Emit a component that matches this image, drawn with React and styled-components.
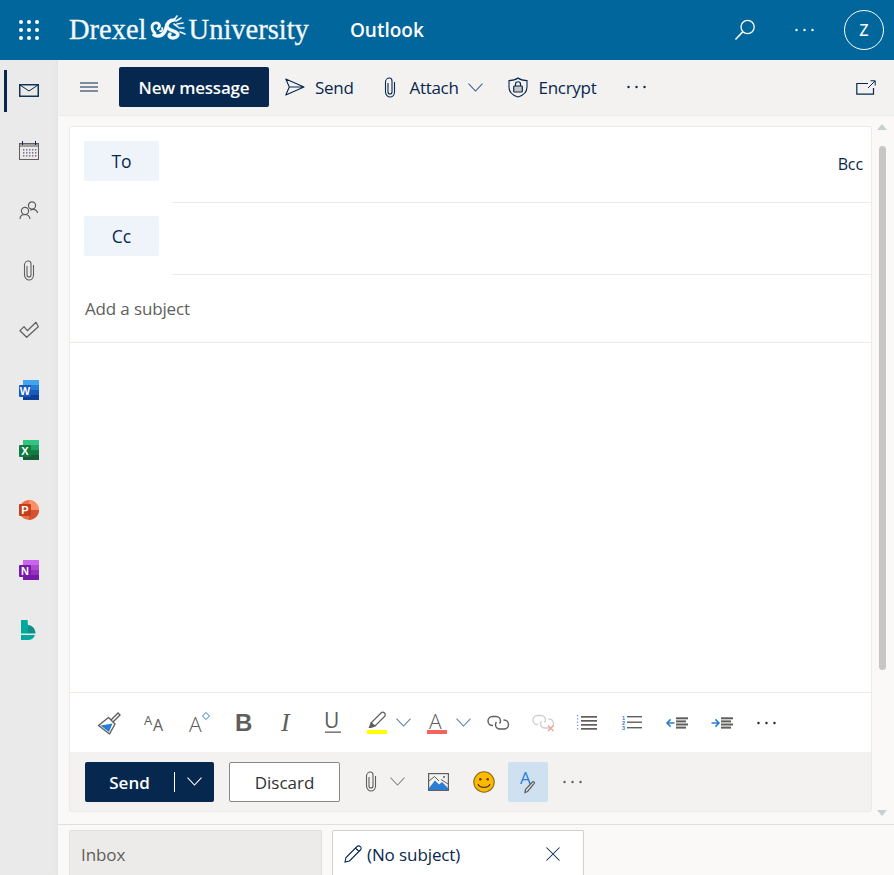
import React from "react";
import styled, { createGlobalStyle } from "styled-components";

const NAVY = "#06284e";
const GREY = "#605e5c";
const BLUE = "#2b7cd3";

const GlobalStyle = createGlobalStyle`
    html, body {
        margin: 0;
        padding: 0;
        overflow: hidden;
    }
    body {
        font-family: "Open Sans", "Noto Sans", "Liberation Sans", sans-serif;
        color: ${NAVY};
    }
    * {
        box-sizing: border-box;
    }
`;

const Page = styled.div`
    display: flex;
    flex-direction: column;
    width: 100vw;
    height: 100vh;
    overflow: hidden;
    background-color: #faf9f8;
`;

const Header = styled.header`
    display: flex;
    align-items: center;
    flex: none;
    height: 60px;
    padding-left: 19px;
    background-color: #00669b;
    color: white;
`;

const Logo = styled.div`
    display: flex;
    align-items: center;
    margin-left: 30px;
    font-family: "Liberation Serif", serif;
    font-size: 28.5px;
    line-height: 32px;
    color: #f4f8fa;
    -webkit-text-stroke: 0.3px #f4f8fa;
`;

const AppName = styled.div`
    margin-left: 41px;
    font-size: 19px;
    font-weight: 600;
`;

const HeaderRight = styled.div`
    display: flex;
    align-items: center;
    margin-left: auto;
    padding-right: 10px;
`;

const HeaderDots = styled.div`
    display: flex;
    margin: 0 30px 0 39px;
`;

const Avatar = styled.div`
    display: flex;
    align-items: center;
    justify-content: center;
    width: 40px;
    height: 40px;
    border: 1px solid white;
    border-radius: 50%;
    font-size: 21px;
    line-height: 1;
    padding-bottom: 3px;
`;

const Body = styled.div`
    display: flex;
    flex: 1;
    min-height: 0;
`;

const Rail = styled.nav`
    flex: none;
    width: 58px;
    background-color: #ebeaea;
    box-shadow: inset -3px 0 3px -2px #e2e1e0;
`;

const RailItem = styled.div`
    position: relative;
    display: flex;
    align-items: center;
    justify-content: center;
    width: 57px;
    height: 60px;

    &::before {
        content: "";
        display: ${(props) => (props.$active ? "block" : "none")};
        position: absolute;
        left: 4px;
        top: 10px;
        width: 3px;
        height: 42px;
        background-color: ${NAVY};
    }
`;

const Main = styled.main`
    display: flex;
    flex-direction: column;
    flex: 1;
    min-width: 0;
`;

const Toolbar = styled.div`
    display: flex;
    align-items: center;
    flex: none;
    height: 56px;
    padding: 0 18px 1px 22px;
    background-color: #f3f2f1;
    border-bottom: 1px solid #edebe9;
    font-size: 17px;
`;

const NewMessage = styled.div`
    display: flex;
    align-items: center;
    justify-content: center;
    width: 150px;
    height: 40px;
    margin: 0 16px 0 21px;
    border-radius: 2px;
    background-color: ${NAVY};
    color: white;
    font-size: 17px;
    font-weight: 600;
    letter-spacing: -0.2px;
`;

const ToolItem = styled.div`
    display: flex;
    align-items: center;
    gap: ${(props) => props.$gap || 11}px;
    margin-right: ${(props) => props.$right || 0}px;
    letter-spacing: -0.3px;
`;

const PopOut = styled.div`
    display: flex;
    margin-left: auto;
`;

const ComposeArea = styled.div`
    display: flex;
    flex: 1;
    min-height: 0;
    padding-left: 11px;
`;

const Card = styled.section`
    display: flex;
    flex-direction: column;
    width: 803px;
    margin: 10px 0 12px;
    background-color: white;
    border: 1px solid #edebe9;
    border-radius: 2px;
`;

const RecipientRow = styled.div`
    display: flex;
    flex: none;
    height: ${(props) => props.$height}px;
    padding-left: 14px;
`;

const RecipientPill = styled.div`
    display: flex;
    align-items: center;
    justify-content: center;
    width: 75px;
    height: 40px;
    margin-top: ${(props) => props.$top}px;
    border-radius: 2px;
    background-color: #eff4fb;
    font-size: 17.5px;
    font-weight: 500;
`;

const RecipientField = styled.div`
    display: flex;
    flex: 1;
    justify-content: flex-end;
    margin-left: 13px;
    border-bottom: 1px solid #edebe9;
`;

const Bcc = styled.span`
    margin: 26px 8px 0 0;
    font-size: 16px;
    line-height: 22px;
    letter-spacing: -0.1px;
`;

const Subject = styled.div`
    display: flex;
    align-items: center;
    flex: none;
    height: 68px;
    padding-left: 15px;
    border-bottom: 1px solid #edebe9;
    color: ${GREY};
    font-size: 17px;
    letter-spacing: -0.15px;
`;

const Editor = styled.div`
    flex: 1;
`;

const FormatBar = styled.div`
    display: flex;
    align-items: center;
    flex: none;
    height: 60px;
    padding-left: 16.6px;
    border-top: 1px solid #edebe9;
`;

const Slot = styled.div`
    display: flex;
    align-items: center;
    justify-content: center;
    flex: none;
    width: ${(props) => props.$w || 44.8}px;
`;

const SplitGroup = styled.div`
    display: flex;
    margin: 0 4px;
`;

const ActionBar = styled.div`
    display: flex;
    align-items: center;
    flex: none;
    height: 59px;
    padding-left: 15px;
    background-color: #f3f2f1;
`;

const SendButton = styled.div`
    display: flex;
    align-items: center;
    width: 129px;
    height: 40px;
    border-radius: 2px;
    background-color: ${NAVY};
    color: white;
    font-size: 17px;
    font-weight: 600;
`;

const SendLabel = styled.span`
    width: 89px;
    padding-top: 1px;
    text-align: center;
`;

const SendSplit = styled.span`
    width: 1px;
    height: 20px;
    background-color: white;
`;

const SendCaret = styled.span`
    display: flex;
    justify-content: center;
    flex: 1;
`;

const DiscardButton = styled.div`
    display: flex;
    align-items: center;
    justify-content: center;
    width: 111px;
    height: 40px;
    margin: 0 19px 0 15px;
    padding-top: 1px;
    border: 1px solid #8a8886;
    border-radius: 2px;
    background-color: white;
    color: #323130;
    font-size: 17px;
    font-weight: 500;
`;

const SignatureButton = styled.div`
    display: flex;
    align-items: center;
    justify-content: center;
    width: 40px;
    height: 40px;
    margin-left: 5px;
    border-radius: 2px;
    background-color: #cfe0f1;
`;

const Scrollbar = styled.div`
    display: flex;
    flex-direction: column;
    align-items: center;
    flex: none;
    width: 20px;
    padding: 8px 0;
`;

const ScrollThumb = styled.div`
    width: 7px;
    height: 524px;
    margin: 16px 0 auto;
    border-radius: 4px;
    background-color: #c8c6c4;
`;

const Arrow = styled.div`
    width: 0;
    height: 0;
    border-left: 5px solid transparent;
    border-right: 5px solid transparent;
    border-top: ${(props) => (props.$down ? "6px solid #c8d0d2" : "none")};
    border-bottom: ${(props) => (props.$down ? "none" : "6px solid #c8d0d2")};
`;

const TabBar = styled.div`
    display: flex;
    flex: none;
    gap: 10px;
    height: 51px;
    padding: 5px 0 0 11px;
    border-top: 1px solid #e1dfdd;
`;

const Tab = styled.div`
    display: flex;
    align-items: center;
    width: ${(props) => props.$width}px;
    height: 50px;
    padding: 0 ${(props) => (props.$active ? 23 : 11)}px 3px 11px;
    border: 1px solid ${(props) => (props.$active ? "#d2d0ce" : "#e1dfdd")};
    border-bottom: none;
    border-radius: 2px 2px 0 0;
    background-color: ${(props) => (props.$active ? "white" : "#edebe9")};
    color: ${(props) => (props.$active ? NAVY : GREY)};
    font-size: 17px;
    font-weight: ${(props) => (props.$active ? 500 : 400)};
    letter-spacing: -0.1px;
`;

const TabTitle = styled.span`
    flex: 1;
    margin-left: 5px;
`;

const Svg = ({ w, h, children, style, ...rest }) => (
    <svg width={w} height={h} viewBox={`0 0 ${w} ${h}`} fill="none" style={{ display: "block", flex: "none", overflow: "visible", ...style }} {...rest}>
        {children}
    </svg>
);

const Waffle = () => (
    <Svg w={20} h={20}>
        {[2, 10, 18].map((y) =>
            [2, 10, 18].map((x) => <circle key={`${x}-${y}`} cx={x} cy={y} r="2" fill="white" />)
        )}
    </Svg>
);

const Dragon = () => (
    <Svg w={38} h={23} style={{ margin: "-5px 1px 0 3px" }}>
        <g stroke="#f4f8fa" strokeLinecap="round">
            <path d="M5 17 C1 14 1 8 5 7 C9 6 11 10 8 12.5" strokeWidth="2.8" />
            <path d="M4 19 C10 22 15 18 16 12 C17 7 19 4 24 4" strokeWidth="3.6" />
            <path d="M17 11 C19 15 24 14 27 17 C29 19 27 22 23 22 C20 22 18 20 20 18" strokeWidth="3.4" />
            <path d="M24 4 L27 0 M26 5 L31 2 M27 8 L33 7 M24 8 L28 11 M29 12 L34 12 M30 16 L35 18" strokeWidth="1.6" />
            <path d="M10 15 C12 16 13 14 12 12" strokeWidth="1.8" />
        </g>
    </Svg>
);

const Search = () => (
    <Svg w={22} h={22}>
        <circle cx="13.6" cy="8" r="6.6" stroke="white" strokeWidth="1.3" />
        <path d="M8.8 12.8 L1.5 20.5" stroke="white" strokeWidth="1.6" />
    </Svg>
);

const Dots = ({ color = NAVY, w = 19, r = 1.2 }) => (
    <Svg w={w} h={4}>
        <circle cx={r + 0.3} cy="2" r={r} fill={color} />
        <circle cx={w / 2} cy="2" r={r} fill={color} />
        <circle cx={w - r - 0.3} cy="2" r={r} fill={color} />
    </Svg>
);

const Mail = () => (
    <Svg w={20} h={13}>
        <rect x="0.75" y="0.75" width="18.5" height="11.5" stroke={NAVY} strokeWidth="1.4" />
        <path d="M1 1 L10 7 L19 1" stroke={NAVY} />
    </Svg>
);

const Calendar = () => (
    <Svg w={20} h={19}>
        <rect x="0.5" y="2.5" width="19" height="16" stroke={GREY} />
        <rect x="1" y="3" width="18" height="3" fill="#a19f9d" />
        <path d="M3.5 0 V4 M16.5 0 V4" stroke={NAVY} />
        {[8, 11, 14].map((y) =>
            [4, 7, 10, 13, 16].map((x) => (
                <rect key={`${x}-${y}`} x={x} y={y} width="1.4" height="1.6" fill={(x + y) % 2 ? "#8a6fa8" : "#7a7876"} />
            ))
        )}
    </Svg>
);

const People = () => (
    <Svg w={20} h={20}>
        <circle cx="13" cy="5.5" r="3.6" stroke={GREY} strokeWidth="1.2" />
        <circle cx="6" cy="11" r="3.6" stroke={GREY} strokeWidth="1.2" />
        <path d="M1 19 C1 16 3 14.5 6 14.5 C9 14.5 10.5 16 11 19 M11.5 10.5 C12 9.5 13 9.3 14 9.3 C16.5 9.3 18 10.5 18.6 13" stroke={GREY} strokeWidth="1.2" />
    </Svg>
);

const Clip = ({ color = GREY }) => (
    <Svg w={12} h={21}>
        <path
            d="M4 6 V15 C4 16.5 5 17 6 17 C7 17 8 16.5 8 15 V4 C8 2 7 1 5.5 1 C3 1 1.5 3 1.5 5 V15 C1.5 18 4 20 6 20 C8.5 20 10.5 18 10.5 15 V5"
            stroke={color}
            strokeWidth="1.1"
        />
    </Svg>
);

const Task = () => (
    <Svg w={20} h={18}>
        <path d="M1 9.7 L5 5.7 L8.3 9.7 L17 1.3 L19.3 5.7 L7.7 16.3 Z" stroke={GREY} strokeWidth="1.2" strokeLinejoin="round" />
    </Svg>
);

const OfficeTile = ({ letter, bands, front }) => (
    <Svg w={20} h={20}>
        {bands.map((color, i) => (
            <rect key={color} x="4" y={i * 5} width="16" height="5" fill={color} />
        ))}
        <rect y="5" width="12" height="12" rx="1" fill={front} />
        <text x="6" y="15" textAnchor="middle" fontFamily="Liberation Sans" fontSize="11" fontWeight="700" fill="white">
            {letter}
        </text>
    </Svg>
);

const PowerPoint = () => (
    <Svg w={20} h={20}>
        <circle cx="10" cy="10" r="10" fill="#ed6c47" />
        <path d="M10 0 A10 10 0 0 1 20 10 H10 Z" fill="#ff8f6b" />
        <path d="M10 10 H20 A10 10 0 0 1 10 20 Z" fill="#d35230" />
        <rect y="4" width="12" height="12" rx="1" fill="#c43e1c" />
        <text x="6" y="14" textAnchor="middle" fontFamily="Liberation Sans" fontSize="11" fontWeight="700" fill="white">
            P
        </text>
    </Svg>
);

const Bookings = () => (
    <Svg w={15} h={20}>
        <path d="M0 0 H6.5 L7 5 V13.5 H0 Z" fill="#00a99d" />
        <path d="M7 5 C11 5.5 14.5 8.5 14.5 13.5 H7 Z" fill="#0f8f86" />
        <path d="M0 15 H14 C13 18 10.5 20 7 20 H0 Z" fill="#00a99d" />
    </Svg>
);

const Burger = () => (
    <Svg w={18} h={10}>
        <path d="M0 1 H18 M0 5 H18 M0 9 H18" stroke={NAVY} />
    </Svg>
);

const Plane = () => (
    <Svg w={20} h={18}>
        <path d="M0.8 1 L19 9 L0.8 17 L4.3 9 Z M4.3 9 H19" stroke={NAVY} strokeWidth="1.1" strokeLinejoin="round" />
    </Svg>
);

const Chevron = ({ color = "#3d5f88", w = 15 }) => (
    <Svg w={w} h={9}>
        <path d={`M0.5 0.7 L${w / 2} 8 L${w - 0.5} 0.7`} stroke={color} strokeWidth="1.05" />
    </Svg>
);

const Shield = () => (
    <Svg w={20} h={21}>
        <path d="M10 1 C12.5 3 15.5 3.6 19 3.6 V10 C19 15 15 18.5 10 20 C5 18.5 1 15 1 10 V3.6 C4.5 3.6 7.5 3 10 1 Z" stroke={NAVY} strokeWidth="1.1" />
        <rect x="5.7" y="9" width="8.6" height="6" rx="0.8" stroke={NAVY} strokeWidth="1.2" fill="#c8c6c4" />
        <path d="M7.5 9 V7 C7.5 4 12.5 4 12.5 7 V9" stroke={NAVY} strokeWidth="1.2" />
    </Svg>
);

const Popout = () => (
    <Svg w={20} h={15}>
        <path d="M12 3.5 H0.8 V14.2 H17.5 V8" stroke={NAVY} strokeWidth="1.2" />
        <path d="M12 8 L19 1 M14.5 0.8 H19.2 V5.5" stroke={NAVY} />
    </Svg>
);

const Brush = () => (
    <Svg w={24} h={24}>
        <path d="M14 9 L21 2 L23 4 L16 11" stroke={GREY} strokeWidth="1.4" />
        <path d="M1.5 14.5 L11.5 6.5 L18 13 L12.5 23 Z" fill="white" stroke={GREY} strokeWidth="1.4" strokeLinejoin="round" />
        <path d="M3.5 14.5 L15.5 12.5 L12 21 Z" fill="#2b7cd3" />
    </Svg>
);

const Glyph = styled.text`
    font-family: ${(props) => props.$family || "'Liberation Sans', sans-serif"};
    font-size: ${(props) => props.$size}px;
    font-weight: ${(props) => props.$weight || 400};
    font-style: ${(props) => (props.$italic ? "italic" : "normal")};
    fill: ${(props) => props.$color || GREY};
`;

const FontSize = () => (
    <Svg w={20} h={18}>
        <Glyph x="0" y="11" $size="13" $family="'Open Sans', sans-serif">A</Glyph>
        <Glyph x="9" y="17" $size="16" $family="'Open Sans', sans-serif">A</Glyph>
    </Svg>
);

const FontGrow = () => (
    <Svg w={20} h={22}>
        <Glyph x="0" y="20" $size="21" $family="'Open Sans', sans-serif" $weight="300">A</Glyph>
        <path d="M13.5 4 L17 0.5 L20.5 4 L17 7.5 Z" stroke={BLUE} fill="none" />
    </Svg>
);

const Highlighter = () => (
    <Svg w={20} h={23}>
        <path d="M4 12 L14 2 C15 1 16.5 1 17.5 2 C18.5 3 18.5 4.5 17.5 5.5 L8 15 Z" stroke={GREY} strokeWidth="1.2" />
        <path d="M4 11 L8.5 15.5 L4 17 L1.5 17 Z" fill={GREY} />
        <rect y="19" width="20" height="4" fill="#ffff00" />
    </Svg>
);

const FontColor = () => (
    <Svg w={20} h={23}>
        <Glyph x="2" y="18" $size="21" $family="'Open Sans', sans-serif" $weight="300">A</Glyph>
        <rect y="19" width="20" height="4" fill="#f2645c" />
    </Svg>
);

const ChainLink = ({ color = GREY }) => (
    <g stroke={color} strokeWidth="1.4">
        <path d="M6 11.5 H5.5 C3 11.5 1 9.5 1 7 C1 4.5 3 2.5 5.5 2.5 H9 C11.5 2.5 13.5 4.5 13.5 7 C13.5 8 13 9 12.5 9.5" />
        <path d="M16.5 6 H17 C19.5 6 21.5 8 21.5 10.5 C21.5 13 19.5 15 17 15 H13 C10.5 15 8.5 13 8.5 10.5 C8.5 9.5 9 8.5 9.5 8" />
    </g>
);

const Link = () => (
    <Svg w={22} h={17}>
        <ChainLink />
    </Svg>
);

const Unlink = () => (
    <Svg w={22} h={19}>
        <ChainLink color="#d2d0ce" />
        <path d="M16 12.5 L21.5 18 M21.5 12.5 L16 18" stroke="#eda8a0" strokeWidth="1.5" />
    </Svg>
);

const Lines = ({ x, ys, ws, thick = 1.7 }) =>
    ys.map((y, i) => <rect key={y} x={x} y={y} width={ws ? ws[i] : 20 - x} height={thick} fill={GREY} />);

const Bullets = () => (
    <Svg w={20} h={15}>
        <path d="M0.7 0 V15" stroke={BLUE} strokeDasharray="1.2 2.1" />
        <Lines x={4} ys={[1, 5, 9, 13]} />
    </Svg>
);

const Numbered = () => (
    <Svg w={20} h={15}>
        <Glyph x="0" y="4.5" $size="5.5" $color={BLUE} $weight="700">1</Glyph>
        <Glyph x="0" y="9.8" $size="5.5" $color={BLUE} $weight="700">2</Glyph>
        <Glyph x="0" y="15" $size="5.5" $color={BLUE} $weight="700">3</Glyph>
        <Lines x={5} ys={[1, 6.5, 12]} thick={1.4} />
    </Svg>
);

const indentWidths = [12, 10, 12, 10];

const Outdent = () => (
    <Svg w={22} h={12}>
        <path d="M8.5 6 H1 M4.6 2.4 L1 6 L4.6 9.6" stroke={BLUE} strokeWidth="1.5" />
        <Lines x={10} ys={[0.3, 3.4, 6.5, 9.6]} ws={indentWidths} thick={2} />
    </Svg>
);

const Indent = () => (
    <Svg w={22} h={12}>
        <path d="M0.5 6 H8 M4.4 2.4 L8 6 L4.4 9.6" stroke={BLUE} strokeWidth="1.5" />
        <Lines x={10} ys={[0.3, 3.4, 6.5, 9.6]} ws={indentWidths} thick={2} />
    </Svg>
);

const Picture = () => (
    <Svg w={21} h={18}>
        <rect x="0.6" y="0.6" width="19.8" height="16.8" stroke={GREY} strokeWidth="1.2" />
        <path d="M1 15 L7 7.5 L11 11.5 L14 9 L20 15 V17 H1 Z" fill={BLUE} />
        <path d="M1 8 L6.5 3.5 L11 8 M13 6.5 L20 11" stroke={GREY} />
        <circle cx="16" cy="4" r="1" fill={GREY} />
    </Svg>
);

const Smile = () => (
    <Svg w={22} h={22}>
        <circle cx="11" cy="11" r="10.2" fill="#ffb900" stroke="#8a6d1c" strokeWidth="1.1" />
        <circle cx="7.3" cy="8.2" r="1.2" fill="#4a3b10" />
        <circle cx="14.7" cy="8.2" r="1.2" fill="#4a3b10" />
        <path d="M5 13 C6.5 17.5 15.5 17.5 17 13" stroke="#4a3b10" strokeWidth="1.1" />
    </Svg>
);

const Signature = () => (
    <Svg w={16} h={24}>
        <Glyph x="0" y="14" $size="17" $color={BLUE} $family="'Open Sans', sans-serif">A</Glyph>
        <path d="M5 22.5 L5.5 19.5 L12.5 12 C13.5 11 15 12.3 14.2 13.4 L7.5 21.5 Z" stroke={GREY} strokeWidth="1.3" fill="#e8eef5" />
    </Svg>
);

const Pencil = () => (
    <Svg w={18} h={18}>
        <path d="M1 17 L2 12.5 L13 1.5 C14 0.6 15.5 0.6 16.4 1.6 C17.4 2.5 17.4 4 16.4 5 L5.5 16 Z M11.5 3 L15 6.5" stroke={NAVY} strokeWidth="1.1" />
    </Svg>
);

const Close = () => (
    <Svg w={14} h={14}>
        <path d="M0.5 0.5 L13.5 13.5 M13.5 0.5 L0.5 13.5" stroke={NAVY} strokeWidth="1.05" />
    </Svg>
);

const railItems = [
    { id: "mail", icon: <Mail />, active: true },
    { id: "calendar", icon: <Calendar /> },
    { id: "people", icon: <People /> },
    { id: "files", icon: <Clip /> },
    { id: "todo", icon: <Task /> },
    { id: "word", icon: <OfficeTile letter="W" front="#185abd" bands={["#41a5ee", "#2b7cd3", "#185abd", "#103f91"]} /> },
    { id: "excel", icon: <OfficeTile letter="X" front="#107c41" bands={["#33c481", "#21a366", "#107c41", "#185c37"]} /> },
    { id: "powerpoint", icon: <PowerPoint /> },
    { id: "onenote", icon: <OfficeTile letter="N" front="#7719aa" bands={["#ca64ea", "#ae4bd5", "#9332bf", "#7719aa"]} /> },
    { id: "bookings", icon: <Bookings /> },
];

const App = () => {
    return (
        <Page>
            <GlobalStyle />
            <Header>
                <Waffle />
                <Logo>
                    Drexel
                    <Dragon />
                    University
                </Logo>
                <AppName>Outlook</AppName>
                <HeaderRight>
                    <Search />
                    <HeaderDots>
                        <Dots color="white" />
                    </HeaderDots>
                    <Avatar>z</Avatar>
                </HeaderRight>
            </Header>
            <Body>
                <Rail>
                    {railItems.map((item) => (
                        <RailItem key={item.id} $active={item.active}>
                            {item.icon}
                        </RailItem>
                    ))}
                </Rail>
                <Main>
                    <Toolbar>
                        <Burger />
                        <NewMessage>New message</NewMessage>
                        <ToolItem $right={30} $gap={10}>
                            <Plane />
                            Send
                        </ToolItem>
                        <ToolItem $right={9} $gap={14}>
                            <Clip color={NAVY} />
                            Attach
                        </ToolItem>
                        <ToolItem $right={25}>
                            <Chevron />
                        </ToolItem>
                        <ToolItem $right={31}>
                            <Shield />
                            Encrypt
                        </ToolItem>
                        <Dots />
                        <PopOut>
                            <Popout />
                        </PopOut>
                    </Toolbar>
                    <ComposeArea>
                        <Card>
                            <RecipientRow $height={76}>
                                <RecipientPill $top={14}>To</RecipientPill>
                                <RecipientField>
                                    <Bcc>Bcc</Bcc>
                                </RecipientField>
                            </RecipientRow>
                            <RecipientRow $height={72}>
                                <RecipientPill $top={13}>Cc</RecipientPill>
                                <RecipientField />
                            </RecipientRow>
                            <Subject>Add a subject</Subject>
                            <Editor />
                            <FormatBar>
                                <Slot><Brush /></Slot>
                                <Slot><FontSize /></Slot>
                                <Slot><FontGrow /></Slot>
                                <Slot>
                                    <Svg w={16} h={20}>
                                        <Glyph x="0" y="18" $size="24" $weight="700">B</Glyph>
                                    </Svg>
                                </Slot>
                                <Slot>
                                    <Svg w={14} h={20}>
                                        <Glyph x="0" y="18" $size="26" $italic $family="'Liberation Serif', serif">I</Glyph>
                                    </Svg>
                                </Slot>
                                <Slot>
                                    <Svg w={16} h={21}>
                                        <Glyph x="-1" y="16" $size="21" $family="'Open Sans', sans-serif">U</Glyph>
                                        <rect y="19.5" width="16" height="1.3" fill={GREY} />
                                    </Svg>
                                </Slot>
                                <SplitGroup>
                                    <Slot $w={36}><Highlighter /></Slot>
                                    <Slot $w={16}><Chevron color="#5b7fa8" /></Slot>
                                </SplitGroup>
                                <SplitGroup>
                                    <Slot $w={36}><FontColor /></Slot>
                                    <Slot $w={16}><Chevron color="#5b7fa8" /></Slot>
                                </SplitGroup>
                                <Slot><Link /></Slot>
                                <Slot><Unlink /></Slot>
                                <Slot><Bullets /></Slot>
                                <Slot><Numbered /></Slot>
                                <Slot><Outdent /></Slot>
                                <Slot><Indent /></Slot>
                                <Slot><Dots color="#201f1e" /></Slot>
                            </FormatBar>
                            <ActionBar>
                                <SendButton>
                                    <SendLabel>Send</SendLabel>
                                    <SendSplit />
                                    <SendCaret>
                                        <Chevron color="white" />
                                    </SendCaret>
                                </SendButton>
                                <DiscardButton>Discard</DiscardButton>
                                <Slot $w={24}><Clip /></Slot>
                                <Slot $w={28}><Chevron color="#8a8886" /></Slot>
                                <Slot $w={54}><Picture /></Slot>
                                <Slot $w={38}><Smile /></Slot>
                                <SignatureButton>
                                    <Signature />
                                </SignatureButton>
                                <Slot $w={48}><Dots color={GREY} /></Slot>
                            </ActionBar>
                        </Card>
                        <Scrollbar>
                            <Arrow />
                            <ScrollThumb />
                            <Arrow $down />
                        </Scrollbar>
                    </ComposeArea>
                    <TabBar>
                        <Tab $width={253}>Inbox</Tab>
                        <Tab $width={252} $active>
                            <Pencil />
                            <TabTitle>(No subject)</TabTitle>
                            <Close />
                        </Tab>
                    </TabBar>
                </Main>
            </Body>
        </Page>
    );
};

export default App;
